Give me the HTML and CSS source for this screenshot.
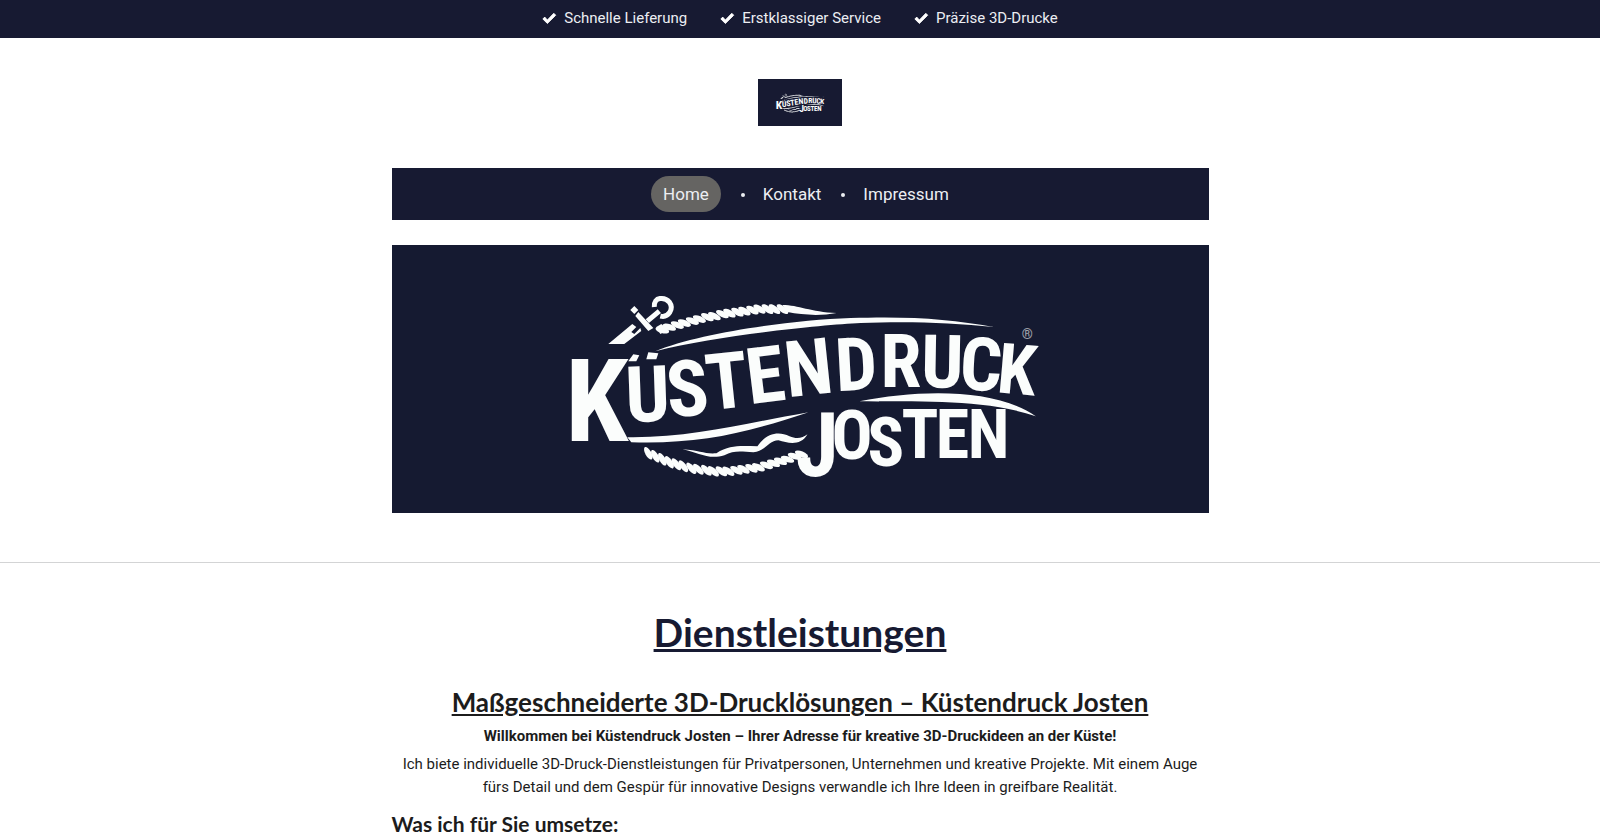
FILE: index.html
```html
<!DOCTYPE html>
<html lang="de">
<head>
<meta charset="utf-8">
<meta name="viewport" content="width=device-width, initial-scale=1">
<title>Küstendruck Josten</title>
<link rel="stylesheet" href="styles.css">
</head>
<body>
<svg class="defs" aria-hidden="true">
  <defs>
    <path id="check" d="M5.7 9.2 12.6 2l2 2-8.9 8.8L.9 8l2-2z" stroke-linejoin="round" stroke-width="1"/>
    <marker id="strand" viewBox="-9 -9 18 18" markerWidth="18" markerHeight="18" markerUnits="userSpaceOnUse" orient="auto">
      <ellipse class="strand" rx="7" ry="3" transform="rotate(38)"/>
    </marker>
    <g id="brand">
      <g class="logo-shapes">
        <path d="M608 344 632 324 636 327 631 332 634 334 640 328 641 331 624 344z"/>
        <path d="M638 312 653 328 648 331 635 316zM630 310l4-4 4 4-4 4z"/>
        <path class="hook" d="M647 321 659 311M654 307C653 296 665 297 669 302 674 309 668 318 660 316"/>
        <path d="M656 327 660 334 668 330 661 324z"/>
        <path d="M782 305C798 305 810 312 836 313 820 316 802 315 787 312z"/>
        <path d="M655 351C700 333 790 320 850 318S950 319 993 327C950 322 900 321 860 323S720 335 655 351z"/>
        <path d="M859 401C920 389 995 388 1035 416 980 398 925 402 859 401z"/>
        <path d="M627 437C690 438 745 423 808 412 745 433 700 444 631 442z"/>
        <path d="M682 449C700 450 704 454 716 453 730 444 741 446 757 446 765 434 777 430 789 436 796 439 802 438 807 434 800 446 788 443 778 440 768 440 765 451 753 452 740 451 733 450 724 455 708 460 698 452 682 449z"/>
        <path d="M628 361 633 354 639 355 636 361zM646 359 648 352 658 353 656 359z"/>
      </g>
      <polyline class="rope" points="662,330 669,327 677,325 684,323 692,321 699,319 707,317 714,316 722,314 729,313 737,312 744,311 752,310 759,309 767,309 774,309 782,309"/>
      <polyline class="rope" points="648,453 655,456 662,459 669,462 676,464 683,466 691,468 698,469 706,470 713,471 721,471 728,471 736,470 743,469 751,468 758,467 766,465 773,463 780,461 787,459 794,456 801,454"/>
      <g class="logo-text">
        <text class="initial" x="565" y="441">K</text>
        <text class="upper" x="626 668 708 749 787" y="422 417 410 404 397" rotate="-2 -4 -6 -7 -6">USTEN</text>
        <text class="upper-end" x="836 880 920 958" y="391 387 387 389" rotate="-3 0 1 3">DRUC</text>
        <text class="end" x="995" y="392" rotate="5">K</text>
        <text class="tall" x="795" y="476">J</text>
        <text class="lower" x="831 867 901 935 967" y="459 466 458 458 458">OSTEN</text>
        <text class="mark" x="1021" y="339">®</text>
      </g>
    </g>
  </defs>
</svg>

<div class="usp-bar">
  <ul class="usps">
    <li><svg class="check" viewBox="0 0 16 15" aria-hidden="true"><use href="#check"/></svg>Schnelle Lieferung</li>
    <li><svg class="check" viewBox="0 0 16 15" aria-hidden="true"><use href="#check"/></svg>Erstklassiger Service</li>
    <li><svg class="check" viewBox="0 0 16 15" aria-hidden="true"><use href="#check"/></svg>Präzise 3D-Drucke</li>
  </ul>
</div>

<header class="container header">
  <a class="logo" href="#" aria-label="Küstendruck Josten">
    <svg class="logo-image" viewBox="392 151 816 457" aria-hidden="true"><use href="#brand"/></svg>
  </a>
  <nav class="nav">
    <a class="nav-link active" href="#" aria-current="page">Home</a>
    <a class="nav-link" href="#">Kontakt</a>
    <a class="nav-link" href="#">Impressum</a>
  </nav>
  <svg class="banner" viewBox="392 245 816 268" role="img" aria-label="Küstendruck Josten"><use href="#brand"/></svg>
</header>

<main class="main">
  <div class="container">
    <h1>Dienstleistungen</h1>
    <h2>Maßgeschneiderte 3D-Drucklösungen – Küstendruck Josten</h2>
    <p><strong>Willkommen bei Küstendruck Josten – Ihrer Adresse für kreative 3D-Druckideen an der Küste!</strong></p>
    <p>Ich biete individuelle 3D-Druck-Dienstleistungen für Privatpersonen, Unternehmen und kreative Projekte. Mit einem Auge fürs Detail und dem Gespür für innovative Designs verwandle ich Ihre Ideen in greifbare Realität.</p>
    <h3>Was ich für Sie umsetze:</h3>
  </div>
</main>
</body>
</html>
```
FILE: styles.css
```css
* { box-sizing: border-box; }
html { overflow: hidden; }
body {
  margin: 0;
  background: #fff;
  color: #1c1c1c;
  font: 15px/23px Roboto, "Liberation Sans", sans-serif;
}
.defs { position: absolute; width: 0; height: 0; }
.container { width: 100%; max-width: 817px; margin: 0 auto; }

.usp-bar { background: #171a32; color: #eceef2; padding: 7px 14px 8px; }
.usps {
  display: flex;
  justify-content: center;
  gap: 33px;
  margin: 0;
  padding: 0;
  list-style: none;
}
.usps li { display: flex; align-items: center; gap: 7px; }
.check { width: 15px; height: 15px; fill: #fff; stroke: #fff; }

.header { display: flex; flex-direction: column; align-items: center; padding: 41px 0 49px; }
.logo { display: block; margin-bottom: 42px; }
.logo-image { display: block; width: 84px; background: #171a32; }
.nav {
  display: flex;
  align-items: center;
  justify-content: center;
  width: 100%;
  margin-bottom: 25px;
  padding: 8px 0;
  background: #171a32;
}
.nav-link {
  padding: 6px 0;
  color: #eceef2;
  font-size: 17px;
  line-height: 24px;
  text-decoration: none;
}
.nav-link.active { padding: 6px 12px; border-radius: 18px; background: #656462; }
.nav-link + .nav-link::before {
  content: "";
  display: inline-block;
  width: 4px;
  height: 4px;
  margin: 0 18px 2px 20px;
  border-radius: 50%;
  background: #eceef2;
  vertical-align: middle;
}
.banner { display: block; width: 100%; background: #151a31; }

.logo-shapes, .logo-text, .strand { fill: #fbfdfc; }
.hook { fill: none; stroke: #fbfdfc; stroke-width: 5; }
.rope { fill: none; marker: url(#strand); }
.logo-text { font-family: "Liberation Sans Narrow", "Roboto Condensed", "Open Sans Condensed", "DejaVu Serif Condensed", serif; font-weight: 700; }
.initial { font-size: 114px; }
.upper { font-size: 78px; }
.upper-end { font-size: 74px; }
.end { font-size: 70px; }
.tall { font-size: 88px; }
.lower { font-size: 68px; }
.mark { font-size: 14px; font-weight: 400; opacity: .6; }

.main { border-top: 1px solid #d3d4d5; padding-top: 44px; }
h1, h2, h3 { margin: 0; font-family: Lato, Inter, sans-serif; font-weight: 700; }
h1 { color: #171a32; font-size: 39px; line-height: 50px; }
h2 { margin-top: 28px; font-size: 26px; line-height: 34px; }
h3 { margin-top: 13px; font-size: 21px; line-height: 24px; }
h1, h2, p { text-align: center; }
h1, h2 { text-decoration: underline; }
p { margin: 5px 0 0; }
h2 + p { margin-top: 6px; }
```
